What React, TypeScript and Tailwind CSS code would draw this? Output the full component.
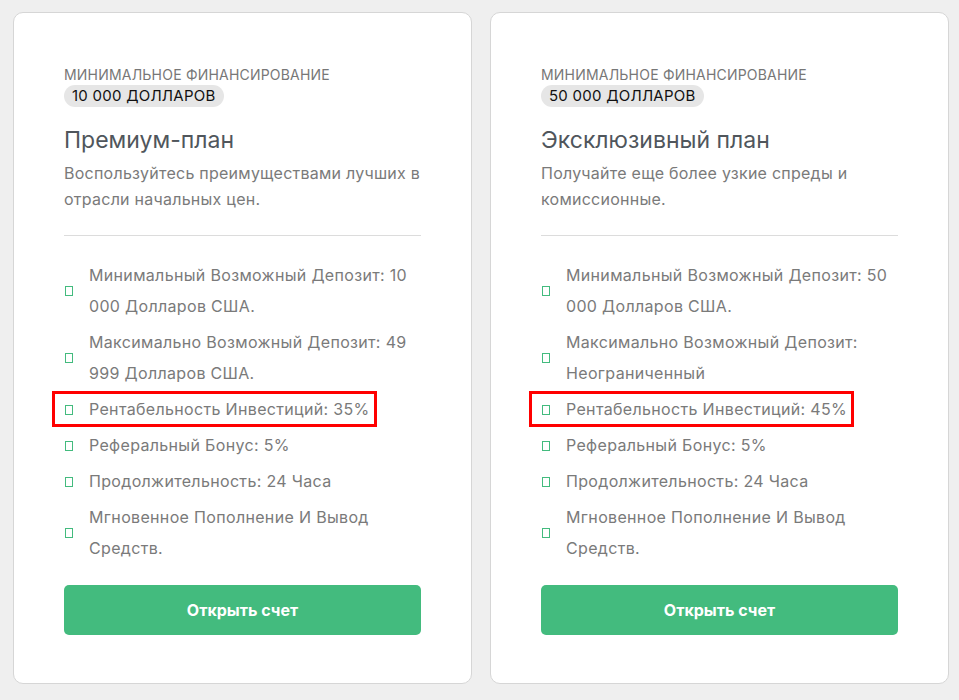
import React from "react";

type Plan = {
  amount: string;
  title: string;
  desc: string;
  items: string[];
  highlight: number;
};

const plans: Plan[] = [
  {
    amount: "10 000 ДОЛЛАРОВ",
    title: "Премиум-план",
    desc: "Воспользуйтесь преимуществами лучших в отрасли начальных цен.",
    items: [
      "Минимальный Возможный Депозит: 10 000 Долларов США.",
      "Максимально Возможный Депозит: 49 999 Долларов США.",
      "Рентабельность Инвестиций: 35%",
      "Реферальный Бонус: 5%",
      "Продолжительность: 24 Часа",
      "Мгновенное Пополнение И Вывод Средств.",
    ],
    highlight: 2,
  },
  {
    amount: "50 000 ДОЛЛАРОВ",
    title: "Эксклюзивный план",
    desc: "Получайте еще более узкие спреды и комиссионные.",
    items: [
      "Минимальный Возможный Депозит: 50 000 Долларов США.",
      "Максимально Возможный Депозит: Неограниченный",
      "Рентабельность Инвестиций: 45%",
      "Реферальный Бонус: 5%",
      "Продолжительность: 24 Часа",
      "Мгновенное Пополнение И Вывод Средств.",
    ],
    highlight: 2,
  },
];

function Card({ plan }: { plan: Plan }) {
  return (
    <div className="flex-1 bg-white border border-[#d6d6d6] rounded-[10px] px-[50px] pt-[52px] pb-[48px] flex flex-col">
      <div className="text-[14px] leading-[20px] tracking-[0.2px] text-[#777] uppercase">Минимальное финансирование</div>
      <div className="w-fit bg-[#e6e6e6] rounded-full px-[8px] text-[15px] leading-[22px] tracking-[0.25px] text-[#111]">
        {plan.amount}
      </div>
      <h2 className="mt-[17px] text-[23px] leading-[32px] text-[#50565c] font-normal">{plan.title}</h2>
      <p className="mt-[4px] text-[16px] leading-[26px] tracking-[0.25px] text-[#7a7a7a]">{plan.desc}</p>
      <div className="mt-[23px] h-px bg-[#dcdcdc]" />
      <ul className="mt-[24px] flex flex-col gap-[5px]">
        {plan.items.map((it, i) => (
          <li
            key={i}
            className={
              "relative flex items-center text-[16px] leading-[31px] tracking-[0.33px] text-[#7a7a7a] " +
              (i === plan.highlight ? "w-fit" : "")
            }
          >
            <span className="shrink-0 ml-[1px] mr-[16px] w-[8px] h-[10px] border border-[#43bb7e]" />
            <span>{it}</span>
            {i === plan.highlight && (
              <span className="absolute -left-[12px] -right-[7px] -top-[3px] -bottom-[2px] border-[3px] border-[#f00] pointer-events-none" />
            )}
          </li>
        ))}
      </ul>
      <button className="mt-[21px] h-[50px] w-full rounded-[5px] bg-[#43bb7e] text-white text-[16px] font-bold">
        Открыть счет
      </button>
    </div>
  );
}

export default function App() {
  return (
    <div
      className="w-[959px] h-[700px] bg-[#efefef] pt-[12px] pl-[13px] pr-[10px] flex gap-[18px] items-start"
      style={{ fontFamily: "Inter, 'Noto Sans', sans-serif" }}
    >
      {plans.map((p, i) => (
        <Card key={i} plan={p} />
      ))}
    </div>
  );
}
